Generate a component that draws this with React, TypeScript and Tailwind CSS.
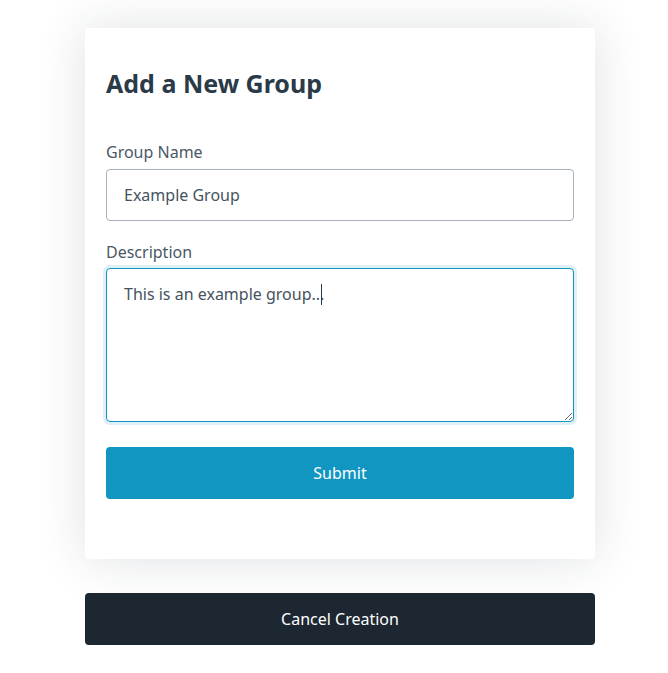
export default function App() {
  return (
    <div className="min-h-[673px] bg-white font-['Noto_Sans',sans-serif]">
      <div className="ml-[85px] w-[510px] pt-[28px]">
        {/* card */}
        <div className="rounded-[4px] bg-white px-[21px] pb-[60px] pt-[38px] shadow-[0_0_50px_rgba(30,40,60,0.14)]">
          <h2 className="text-[25px] font-bold leading-[34px] text-[#2b3a48]">
            Add a New Group
          </h2>

          <label className="mt-[40px] block text-[16px] leading-[24px] text-[#4a5866]">
            Group Name
          </label>
          <input
            defaultValue="Example Group"
            className="mt-[5px] block h-[52px] w-full rounded-[4px] border border-[#a7b0b9] bg-white px-[17px] text-[16px] text-[#46525e] outline-none"
          />

          <label className="mt-[19px] block text-[16px] leading-[24px] text-[#4a5866]">
            Description
          </label>
          <div className="relative mt-[4px]">
            <textarea
              defaultValue="This is an example group..."
              className="block h-[154px] w-full rounded-[4px] border border-[#1196c3] bg-white px-[17px] pt-[13px] text-[16px] leading-[24px] text-[#46525e] outline-none ring-[3px] ring-[#dff0f7]"
            />
            {/* caret */}
            <span className="absolute left-[215px] top-[16px] h-[21px] w-px bg-[#2b3a48]" />
          </div>

          <button className="mt-[25px] block h-[52px] w-full rounded-[4px] bg-[#1196c2] text-[16px] text-white">
            Submit
          </button>
        </div>

        <button className="mt-[34px] block h-[52px] w-full rounded-[4px] bg-[#1d2731] text-[16px] text-white">
          Cancel Creation
        </button>
      </div>
    </div>
  );
}
